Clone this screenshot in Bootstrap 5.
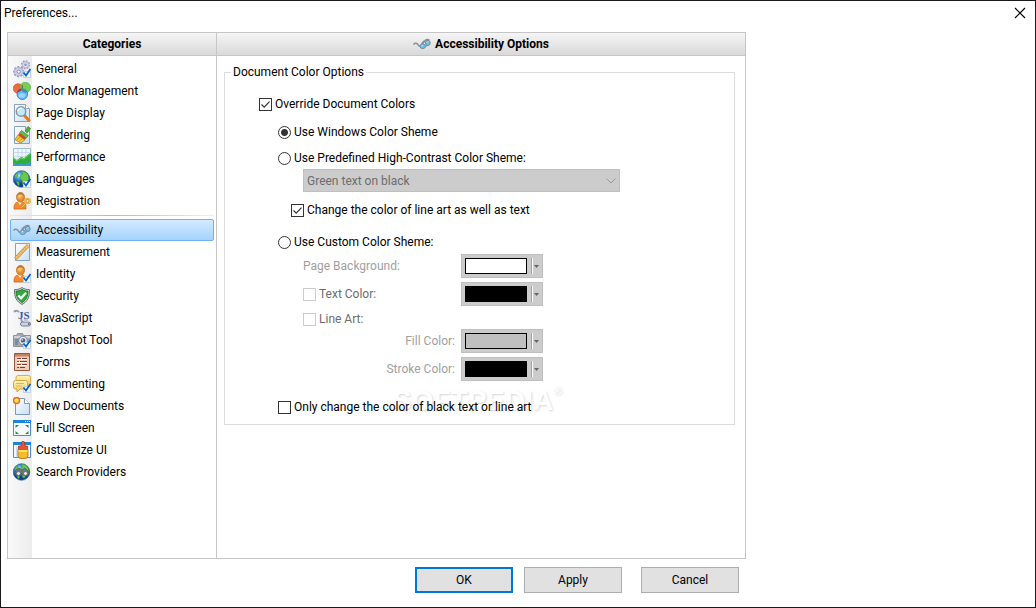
<!DOCTYPE html>
<html lang="en">
<head>
<meta charset="utf-8">
<meta name="viewport" content="width=device-width, initial-scale=1">
<title>Preferences...</title>
<link href="https://cdn.jsdelivr.net/npm/bootstrap@5.3.0/dist/css/bootstrap.min.css" rel="stylesheet">
<style>
body { font-family: Roboto, "Open Sans", sans-serif; font-size: 12px; line-height: 16px; color: #000; background: #fff; }
.window { border: 1px solid #1b181b; }
.titlebar { height: 31px; padding: 4px 9px 0 3px; }
.title-text { font-size: 12px; line-height: 16px; margin: 0; font-weight: 400; }
.close-btn { width: 12px; height: 16px; line-height: 0; }
.dialog { max-width: 745px; padding-left: 6px; }
.panel { border: 1px solid #c6c6c6; }
.side { width: 209px; border-right: 1px solid #c6c6c6; }
.head { height: 23px; background: linear-gradient(#f5f5f5, #d9d9d9); border-bottom: 1px solid #c6c6c6; font-size: 12px; line-height: 16px; font-weight: 700; margin: 0; }
.ico { width: 18px; height: 18px; flex: none; }
.cats { padding: 2px 2px 0 2px; background: linear-gradient(90deg, #fafafa, #ececec) left top / 24px 100% no-repeat; }
.cat { height: 22px; padding: 0 3px 0 2px; gap: 5px; border: 1px solid transparent; border-radius: 2px; color: #000; text-decoration: none; }
.cat.active { border-color: #6fb2f2; background: linear-gradient(#d3eaff, #a5d3fb); }
.cat-line { height: 1px; margin: 3px 0; background: linear-gradient(90deg, #e8e8e8, #b4b9c0 50%, #eee); }
.options { padding: 8px 10px 0 7px; }
.group { border: 1px solid #dcdcdc; padding: 0 8px 9px 34px; }
.group > legend { float: none; width: auto; font-size: 12px; line-height: 16px; margin: 0 0 0 -28px; padding: 0 2px; }
.opt { display: flex; align-items: center; gap: 3px; height: 16px; }
.opt input { appearance: none; width: 13px; height: 13px; margin: 0; flex: none; border: 1px solid #333; background: #fff center no-repeat; }
.opt input[type=radio] { border-radius: 50%; }
.opt input[type=radio]:checked { background-image: radial-gradient(circle, #333 3px, transparent 4px); }
.opt input[type=checkbox]:checked { background-image: url("data:image/svg+xml,%3Csvg xmlns='http://www.w3.org/2000/svg' width='11' height='11'%3E%3Cpath d='M1.5 5.5l2.7 2.7 5.3-5.6' fill='none' stroke='%23333' stroke-width='1.2'/%3E%3C/svg%3E"); }
.opt input:disabled { border-color: #ccc; }
.opt input:disabled + label { color: #6d6d6d; }
.level1 { padding-left: 19px; }
.level2 { padding-left: 25px; }
.opt-nested { margin-left: 13px; }
.gap-s { margin-top: 3px; }
.gap-m { margin-top: 10px; }
.gap-l { margin-top: 12px; }
.gap-xl { margin-top: 18px; }
.line-art { margin: 5px 0 2px; }
.scheme { height: 23px; width: 100%; max-width: 317px; font-size: 12px; line-height: 16px; padding: 0 20px 0 3px; border: 1px solid #bfbfbf; border-radius: 0; color: #6d6d6d; opacity: 1; appearance: none;
  background: #ccc url("data:image/svg+xml,%3Csvg xmlns='http://www.w3.org/2000/svg' width='10' height='6'%3E%3Cpath d='M.5.5L5 5 9.500.5' fill='none' stroke='%23999'/%3E%3C/svg%3E") right 3px center no-repeat; }
.colors { display: grid; grid-template-columns: 152px 82px; column-gap: 6px; row-gap: 4px; align-items: center; }
.dim { color: #9f9f9f; }
.well { height: 24px; padding: 0 2px 0 3px; border: 1px solid #bfbfbf; border-radius: 0; background: #ccc; display: flex; align-items: center; }
.swatch { width: 62px; height: 16px; border: 1px solid #000; }
.split { width: 2px; height: 16px; margin: 0 1px 0 4px; background: linear-gradient(90deg, #a0a0a0 50%, #fff 50%); }
.fill-white { background: #fff; } .fill-black { background: #000; } .fill-gray { background: #c0c0c0; }
.group { z-index: 0; }
.stamp { position: absolute; z-index: -1; left: 168px; bottom: 7px; font: bold 28px/32px "Liberation Sans", sans-serif; color: #fff; text-shadow: 1px 1px 2px rgba(0,0,0,.16); pointer-events: none; }
.stamp sup { font-size: 12px; top: -15px; }
.push { width: 98px; height: 26px; padding: 0; font-size: 12px; line-height: 16px; border: 1px solid #adadad; border-radius: 0; background: #e1e1e1; color: #000; }
.push.default { border: 2px solid #0078d7; }
.actions { padding: 8px 7px 14px 0; gap: 11px; }
</style>
</head>
<body>
<svg class="position-absolute" width="0" height="0" aria-hidden="true">
  <defs>
    <linearGradient id="sky" x2="1" y2="1"><stop stop-color="#fff"/><stop offset="1" stop-color="#c5dff5"/></linearGradient>
    <radialGradient id="sea" cx=".35" cy=".3"><stop stop-color="#b5e8ff"/><stop offset=".5" stop-color="#3289dc"/><stop offset="1" stop-color="#123b94"/></radialGradient>
    <radialGradient id="skin" cx=".4" cy=".3"><stop stop-color="#ffd391"/><stop offset="1" stop-color="#e08c2c"/></radialGradient>
    <linearGradient id="gold" y2="1" x2="0"><stop stop-color="#fff6b8"/><stop offset="1" stop-color="#f3c75a"/></linearGradient>
  </defs>
  <symbol id="tick" viewBox="0 0 18 18"><path d="M10.500 11.500h7v6h-7z" fill="#f3f8ff" stroke="#c3d0e2"/><path d="M10.500 12.500l2.500 3 4.500-6.500" fill="none" stroke="#0865c8" stroke-width="1.800"/></symbol>
  <symbol id="sheet" viewBox="0 0 18 18"><path d="M1.500.5h11l4 4v13h-15z" fill="url(#sky)" stroke="#86a4bd"/><path d="M12.500.5v4h4" fill="#fff" stroke="#86a4bd"/></symbol>
  <symbol id="globe" viewBox="0 0 18 18"><circle cx="8.500" cy="9" r="8.300" fill="url(#sea)" stroke="#2459a4" stroke-width=".6"/><path d="M8 1.500c3-1 6 1 7.500 4l.5 4-2.500 2-2 3.500-2-.5-.5-4-2-2 .5-3 2-1.500zM2 5l2-2 1 1-1 3-2 2zM3 11l3 1 .5 3-1.500.5z" fill="#6cc84a" stroke="#2f8b38" stroke-width=".5"/></symbol>
  <symbol id="person" viewBox="0 0 18 18"><path d="M1 17c0-5 1-7 6-7s6 2 6 7z" fill="#f58a33" stroke="#c9661b" stroke-width=".8"/><path d="M5 10l2 3 2-3z" fill="#fff1d8"/><ellipse cx="7.500" cy="5.300" rx="4" ry="4.800" fill="url(#skin)" stroke="#bb7428" stroke-width=".8"/><path d="M3.500 4.500c0-5.500 8-5.500 8 0l-2-2-4 .3z" fill="#c0772a"/></symbol>
  <symbol id="i-general" viewBox="0 0 18 18"><circle cx="12.500" cy="4.800" r="3.600" fill="#d6d9ef" stroke="#989fc5" stroke-width="2" stroke-dasharray="1.600 1.200"/><circle cx="12.500" cy="4.800" r="3" fill="#dcdff0" stroke="#b3b8d6"/><circle cx="12.500" cy="4.800" r="1.200" fill="#8b91b8"/><circle cx="5.700" cy="11.700" r="4.600" fill="#d6d9ef" stroke="#8f96bd" stroke-width="2" stroke-dasharray="2 1.300"/><circle cx="5.700" cy="11.700" r="4" fill="#ced2e8" stroke="#b3b8d6"/><circle cx="5.700" cy="11.700" r="1.600" fill="#fff" stroke="#858bb0"/><use href="#tick"/></symbol>
  <symbol id="i-color" viewBox="0 0 18 18"><circle cx="5" cy="6.500" r="4.800" fill="#ef6a40" stroke="#c74a28" stroke-width=".6"/><circle cx="12.300" cy="5.500" r="5.300" fill="#76cf56" stroke="#4ba435" stroke-width=".6"/><circle cx="9.300" cy="12.200" r="5.300" fill="#63b7f5" stroke="#2675ca" stroke-width=".8"/><path d="M4.300 10.500C5 7 8 6.500 9.500 7c-1.500-2-.5-4 0-4 1 2 .5 6-5.200 7.500z" fill="#a33b35"/><path d="M8.500 7c3-.4 5 1 5.800 3-3 1.500-5.500 0-5.800-3z" fill="#3392b8"/><ellipse cx="9" cy="13.500" rx="3.400" ry="2.600" fill="#b9e4ff" opacity=".6"/></symbol>
  <symbol id="i-page" viewBox="0 0 18 18"><use href="#sheet"/><path d="M11 11l5 5.500" stroke="#dc7b24" stroke-width="3" stroke-linecap="round"/><circle cx="8" cy="7.500" r="4.700" fill="#bfe9ff" stroke="#8396a5" stroke-width="1.500"/><path d="M5 7a3 3 0 0 1 4-2.500" fill="none" stroke="#fff" stroke-width="1.500"/></symbol>
  <symbol id="i-render" viewBox="0 0 18 18"><use href="#sheet"/><path d="M12 5l3-4.500 2.700 2L14 7z" fill="#55ad39" stroke="#327c28" stroke-width=".6"/><path d="M8.500 4.500l6.800 5-2 2.500-6.800-5z" fill="#67bd42" stroke="#327c28" stroke-width=".6"/><path d="M6.500 7l6.800 5-1.500 2-6.800-5z" fill="#d94427"/><path d="M5 9l6.800 5-4 3L2 13.500z" fill="#f5cc36" stroke="#a86c12" stroke-width=".7"/><path d="M4 13.500l3-2.500M6.500 15l3-2.500" stroke="#a86c12" stroke-width=".6"/></symbol>
  <symbol id="i-perf" viewBox="0 0 18 18"><path d="M.5.5h17v17H.5z" fill="#edf5fd" stroke="#9ebbd1"/><path d="M5 .5v12M9 .5v12M13 .5v12M.5 4.500h17M.5 8.500h17" stroke="#b5cbe0" stroke-width=".6"/><path d="M0 9l4 3 4-3 3 1 6-5 1 1v12H0z" fill="#2fae3d"/><path d="M0 10l4 3 4-3 3 1 7-6" fill="none" stroke="#69d758"/><path d="M0 14.500l4 2 4-1 4 1 6-3V18H0z" fill="#3e97de"/></symbol>
  <symbol id="i-lang" viewBox="0 0 18 18"><use href="#globe"/><use href="#tick"/></symbol>
  <symbol id="i-reg" viewBox="0 0 18 18"><use href="#person"/><circle cx="14.500" cy="9" r="2.200" fill="none" stroke="#db9420" stroke-width="2.200"/><path d="M13 11l-5 5M9.500 14l2 2M11 12.500l2 2" fill="none" stroke="#db9420" stroke-width="2"/><circle cx="14.500" cy="9" r="2.500" fill="none" stroke="#ffdc61" stroke-width=".8"/><path d="M12.500 11.500l-4 4" stroke="#ffdc61" stroke-width=".8"/></symbol>
  <symbol id="i-access" viewBox="0 0 18 18"><path d="M.5 9.500C2 7.500 4 8 5 9.700s2 2 3 1l4-5c1-1.500 3-1.500 4.500-.5" fill="none" stroke="#87909a" stroke-width="1.500"/><path d="M8.500 8.500l3-3M12 12l3.500-3" stroke="#87909a" stroke-width="1.200"/><ellipse cx="9.700" cy="11.300" rx="2.700" ry="2.300" fill="#68c4f6" stroke="#7c8791"/><ellipse cx="14.800" cy="7.900" rx="2.400" ry="2.600" fill="#68c4f6" stroke="#7c8791"/><path d="M8.500 11l1.500-1M14 7.500l1-1" stroke="#d9f2ff"/></symbol>
  <symbol id="i-measure" viewBox="0 0 18 18"><path d="M2.500.5h14v17h-14z" fill="url(#sky)" stroke="#80a5ca"/><path d="M1.500 14.500L14 1.500l2 2L4 16.500z" fill="#f9bf65" stroke="#d68328" stroke-width=".8"/><path d="M4 12.500l1 1M6 10.500l1 1M8 8.500l1 1M10 6.500l1 1M12 4.500l1 1" stroke="#a75e19" stroke-width=".7"/></symbol>
  <symbol id="i-identity" viewBox="0 0 18 18"><use href="#person"/><use href="#tick"/></symbol>
  <symbol id="i-security" viewBox="0 0 18 18"><path d="M9 .6c2.500 1.700 5 2 7.400 2C17 10 14 15 9 17.400 4 15 1 10 1.600 2.600 4 2.600 6.500 2.300 9 .6z" fill="#d7dde0" stroke="#626e73"/><path d="M9 2.400c2 1.300 4 1.700 6 1.700C15 9.500 13 13.500 9 15.600 5 13.500 3 9.500 3 4.100c2 0 4-.4 6-1.700z" fill="#2fab3c" stroke="#116b23" stroke-width=".8"/><path d="M5.300 8.500L8 11.300l5-5.500" fill="none" stroke="#fff" stroke-width="2.200"/></symbol>
  <symbol id="i-camera" viewBox="0 0 18 18"><path d="M.5 4.500h3l1-2h5l1 2h7v11H.5z" fill="#a5abb3" stroke="#8a919b"/><path d="M1 5h16v2H1z" fill="#cfd4da"/><path d="M2 8h3v6H2z" fill="#818995"/><circle cx="10" cy="9.500" r="4.300" fill="#e2e6ed" stroke="#7b838e"/><circle cx="10" cy="9.500" r="2.300" fill="#4b5f84"/><circle cx="9.300" cy="8.800" r="1" fill="#a9c9ed"/><use href="#tick"/></symbol>
  <symbol id="i-forms" viewBox="0 0 18 18"><path d="M1.500.5h15v17h-15z" fill="#efccb4" stroke="#985641"/><path d="M2 1h14v2.500H2z" fill="#c78166"/><path d="M4 5.500h4M4 8.500h2M4 11.500h4M4 14.500h2" stroke="#8e4330"/><path d="M9 5.500h5M7 8.500h7M9 11.500h5M7 14.500h5" stroke="#704034"/><path d="M4 6.500h10M4 9.500h10M4 12.500h10" stroke="#fff4e5"/></symbol>
  <symbol id="i-comment" viewBox="0 0 18 18"><path d="M5 .5h10.500q2 0 2 2v6q0 2-2 2H5q-2 0-2-2v-6q0-2 2-2z" fill="url(#gold)" stroke="#d9ad50"/><path d="M2.500 5.500h10q2 0 2 2V12q0 2-2 2H7l-3 3v-3H2.500q-2 0-2-2V7.500q0-2 2-2z" fill="url(#gold)" stroke="#d3a548"/><path d="M3 8.500h8M3 11h6" stroke="#ddb55c"/><use href="#tick"/></symbol>
  <symbol id="i-new" viewBox="0 0 18 18"><path d="M2.500 1.500h9l5 5v11h-14z" fill="url(#sky)" stroke="#8199b3"/><path d="M11.500 1.500v5h5" fill="#fff" stroke="#8199b3"/><circle cx="3.500" cy="3.500" r="3" fill="#ffe44d" stroke="#f26a21" stroke-width="1.500"/></symbol>
  <symbol id="i-full" viewBox="0 0 18 18"><path d="M.5 1.500h17v15H.5z" fill="#f6fafd" stroke="#4a91ca"/><path d="M0 1h18v3H0z" fill="#1686df"/><path d="M12 2.500h1M14 2.500h1M16 2.500h1" stroke="#fff"/><path d="M2.500 6h3.500L2.500 9zM15.500 6H12l3.500 3zM2.500 15H6l-3.500-3zM15.500 15H12l3.500-3z" fill="#289043"/></symbol>
  <symbol id="i-custom" viewBox="0 0 18 18"><path d="M.5 1.500h17v15H.5z" fill="#f0f7fd" stroke="#4a91ca"/><path d="M0 1h18v3H0z" fill="#1686df"/><path d="M4 6v10" stroke="#a7c9e5"/><path d="M8.500 1q2-2 3 0l.5 4h2.500v4h-9V5H8z" fill="#e65232" stroke="#a52b1b" stroke-width=".7"/><path d="M5 8.500h10v6q0 3-3 3H8q-3 0-3-3z" fill="#f4bd27" stroke="#a46c12" stroke-width=".8"/><path d="M5.500 10h9" stroke="#fff08a" stroke-width="1.500"/></symbol>
  <symbol id="i-search" viewBox="0 0 18 18"><use href="#globe"/><path d="M3 7l3-2 3 2 3-2 3 3 1 3-2 2-4-1-1.500-2-1.500 2-3 1-2-3z" fill="#6b757b" stroke="#444d53" stroke-width=".6"/><circle cx="5.500" cy="10.500" r="2" fill="#e3e9ed" stroke="#596268" stroke-width=".8"/><circle cx="12.500" cy="10.500" r="2" fill="#e3e9ed" stroke="#596268" stroke-width=".8"/></symbol>
  <symbol id="i-caret" viewBox="0 0 5 3"><path d="M0 0h5L2.500 3z" fill="#666"/></symbol>
</svg>

<div class="window min-vh-100 d-flex flex-column">
  <header class="titlebar d-flex justify-content-between">
    <h1 class="title-text">Preferences...</h1>
    <button type="button" class="close-btn btn p-0 border-0" aria-label="Close"><svg width="12" height="16" viewBox="0 0 12 16"><path d="M1 3l10 10M11 3L1 13" stroke="#000" stroke-width="1.200"/></svg></button>
  </header>

  <div class="dialog w-100 flex-grow-1 d-flex flex-column">
    <div class="panel flex-grow-1 d-flex">
      <nav class="side flex-shrink-0 d-flex flex-column" aria-label="Categories">
        <h2 class="head d-flex align-items-center justify-content-center">Categories</h2>
        <div class="cats flex-grow-1 d-flex flex-column">
          <a href="#" class="cat d-flex align-items-center"><svg class="ico"><use href="#i-general"/></svg>General</a>
          <a href="#" class="cat d-flex align-items-center"><svg class="ico"><use href="#i-color"/></svg>Color Management</a>
          <a href="#" class="cat d-flex align-items-center"><svg class="ico"><use href="#i-page"/></svg>Page Display</a>
          <a href="#" class="cat d-flex align-items-center"><svg class="ico"><use href="#i-render"/></svg>Rendering</a>
          <a href="#" class="cat d-flex align-items-center"><svg class="ico"><use href="#i-perf"/></svg>Performance</a>
          <a href="#" class="cat d-flex align-items-center"><svg class="ico"><use href="#i-lang"/></svg>Languages</a>
          <a href="#" class="cat d-flex align-items-center"><svg class="ico"><use href="#i-reg"/></svg>Registration</a>
          <div class="cat-line"></div>
          <a href="#" class="cat active d-flex align-items-center" aria-current="page"><svg class="ico"><use href="#i-access"/></svg>Accessibility</a>
          <a href="#" class="cat d-flex align-items-center"><svg class="ico"><use href="#i-measure"/></svg>Measurement</a>
          <a href="#" class="cat d-flex align-items-center"><svg class="ico"><use href="#i-identity"/></svg>Identity</a>
          <a href="#" class="cat d-flex align-items-center"><svg class="ico"><use href="#i-security"/></svg>Security</a>
          <a href="#" class="cat d-flex align-items-center"><svg class="ico" viewBox="0 0 18 18" aria-hidden="true"><path d="M3 2h12v13l-5 2H7z" fill="#edf0fa"/><path d="M1 3c2-2 4-1 5 0M8 10l2 5" fill="none" stroke="#9499b2" stroke-width="2"/><rect x="7.500" y="13" width="10" height="4" rx="2" fill="#cfd2df" stroke="#777c95"/><circle cx="15.800" cy="15" r="1" fill="#676b80"/><path d="M11 10h4v3h-4z" fill="#c3c7d9"/><text x="5" y="10" font-family="Liberation Serif, serif" font-weight="700" font-size="11" fill="#3a5aa5">JS</text></svg>JavaScript</a>
          <a href="#" class="cat d-flex align-items-center"><svg class="ico"><use href="#i-camera"/></svg>Snapshot Tool</a>
          <a href="#" class="cat d-flex align-items-center"><svg class="ico"><use href="#i-forms"/></svg>Forms</a>
          <a href="#" class="cat d-flex align-items-center"><svg class="ico"><use href="#i-comment"/></svg>Commenting</a>
          <a href="#" class="cat d-flex align-items-center"><svg class="ico"><use href="#i-new"/></svg>New Documents</a>
          <a href="#" class="cat d-flex align-items-center"><svg class="ico"><use href="#i-full"/></svg>Full Screen</a>
          <a href="#" class="cat d-flex align-items-center"><svg class="ico"><use href="#i-custom"/></svg>Customize UI</a>
          <a href="#" class="cat d-flex align-items-center"><svg class="ico"><use href="#i-search"/></svg>Search Providers</a>
        </div>
      </nav>

      <main class="flex-grow-1">
        <h2 class="head d-flex align-items-center justify-content-center gap-1"><svg class="ico"><use href="#i-access"/></svg>Accessibility Options</h2>
        <form class="options">
          <fieldset class="group position-relative">
            <legend>Document Color Options</legend>
            <div class="opt mt-3"><input type="checkbox" id="override" checked><label for="override">Override Document Colors</label></div>
            <div class="level1">
              <div class="opt gap-l"><input type="radio" name="scheme" id="win" checked><label for="win">Use Windows Color Sheme</label></div>
              <div class="opt gap-m"><input type="radio" name="scheme" id="pre"><label for="pre">Use Predefined High-Contrast Color Sheme:</label></div>
              <div class="level2 gap-s">
                <select class="scheme d-block" aria-label="High-contrast color scheme" disabled><option>Green text on black</option></select>
              </div>
              <div class="opt opt-nested gap-m"><input type="checkbox" id="lines" checked><label for="lines">Change the color of line art as well as text</label></div>
              <div class="opt mt-3"><input type="radio" name="scheme" id="custom"><label for="custom">Use Custom Color Sheme:</label></div>
              <div class="level2 colors mt-1">
                <label class="dim" for="bg">Page Background:</label>
                <button type="button" class="well" id="bg" disabled><span class="swatch fill-white"></span><span class="split"></span><svg width="5" height="3"><use href="#i-caret"/></svg></button>
                <div class="opt"><input type="checkbox" id="text" disabled><label for="text">Text Color:</label></div>
                <button type="button" class="well" aria-label="Text color" disabled><span class="swatch fill-black"></span><span class="split"></span><svg width="5" height="3"><use href="#i-caret"/></svg></button>
              </div>
              <div class="level2 line-art"><div class="opt"><input type="checkbox" id="art" disabled><label for="art">Line Art:</label></div></div>
              <div class="level2 colors">
                <label class="dim text-end" for="fill">Fill Color:</label>
                <button type="button" class="well" id="fill" disabled><span class="swatch fill-gray"></span><span class="split"></span><svg width="5" height="3"><use href="#i-caret"/></svg></button>
                <label class="dim text-end" for="stroke">Stroke Color:</label>
                <button type="button" class="well" id="stroke" disabled><span class="swatch fill-black"></span><span class="split"></span><svg width="5" height="3"><use href="#i-caret"/></svg></button>
              </div>
              <div class="opt gap-xl"><input type="checkbox" id="only"><label for="only">Only change the color of black text or line art</label></div>
            </div>
            <div class="stamp">SOFTPEDIA<sup>®</sup></div>
          </fieldset>
        </form>
      </main>
    </div>

    <div class="actions d-flex justify-content-end">
      <button type="button" class="push default">OK</button>
      <button type="button" class="push">Apply</button>
      <button type="button" class="push ms-2">Cancel</button>
    </div>
  </div>
</div>
<script src="https://cdn.jsdelivr.net/npm/bootstrap@5.3.0/dist/js/bootstrap.bundle.min.js"></script>
</body>
</html>
